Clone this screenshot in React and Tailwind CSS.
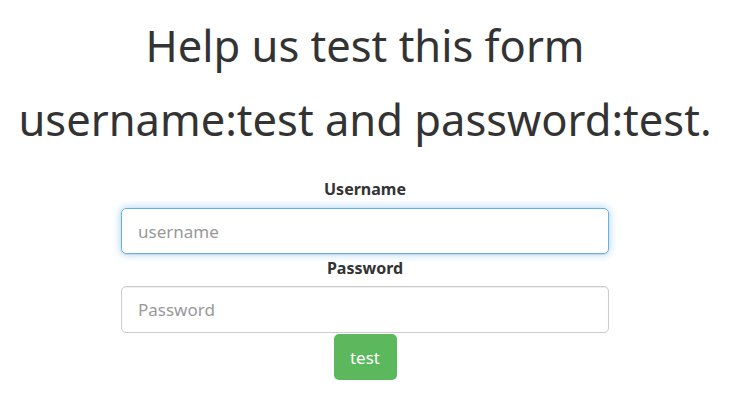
export default function App() {
  return (
    <div className="w-[737px] h-[419px] bg-white text-[#333] overflow-hidden" style={{ fontFamily: '"Noto Sans", "Open Sans", sans-serif' }}>
      <div className="w-[730px] flex flex-col items-center">
        <h1 className="mt-[13px] text-[43.5px] leading-[64px] h-[64px] font-normal">Help us test this form</h1>
        <h1 className="mt-[10px] text-[43.5px] leading-[64px] h-[64px] font-normal">username:test and password:test.</h1>
        <div className="mt-[27px] w-[488px] flex flex-col items-center">
          <label className="h-[22px] leading-[22px] text-[16px] font-bold">Username</label>
          <input
            className="mt-[8px] w-[488px] h-[46px] rounded-[5px] border border-[#66afe9] px-[16px] text-[17px] outline-none shadow-[0_1px_1px_rgba(0,0,0,0.075),0_0_8px_rgba(102,175,233,0.6)] placeholder:text-[#999]"
            placeholder="username"
          />
          <label className="mt-[3px] h-[22px] leading-[22px] text-[16px] font-bold">Password</label>
          <input
            type="password"
            className="mt-[7px] w-[488px] h-[47px] rounded-[5px] border border-[#ccc] px-[16px] text-[17px] outline-none shadow-[inset_0_1px_1px_rgba(0,0,0,0.075)] placeholder:text-[#999]"
            placeholder="Password"
          />
          <button className="mt-[1px] w-[63px] h-[46px] rounded-[5px] bg-[#5cb85c] text-white text-[17px] leading-none">test</button>
        </div>
      </div>
    </div>
  );
}
